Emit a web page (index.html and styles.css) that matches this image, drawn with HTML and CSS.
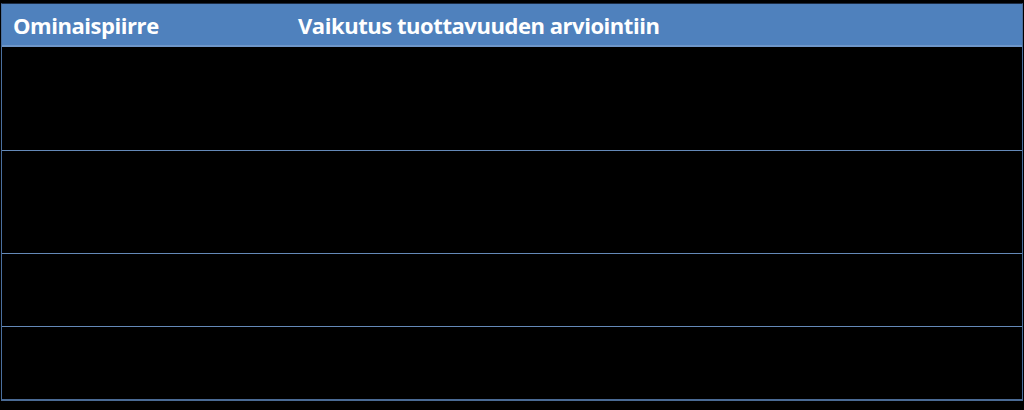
FILE: index.html
```html
<!DOCTYPE html>
<html lang="fi">
<head>
<meta charset="utf-8">
<title>Ominaispiirre</title>
<link rel="stylesheet" href="styles.css">
</head>
<body>
<div class="table">
  <div class="row head">
    <div class="cell c1">Ominaispiirre</div>
    <div class="cell c2">Vaikutus tuottavuuden arviointiin</div>
  </div>
  <div class="row r1"><div class="cell c1"></div><div class="cell c2"></div></div>
  <div class="row r2"><div class="cell c1"></div><div class="cell c2"></div></div>
  <div class="row r3"><div class="cell c1"></div><div class="cell c2"></div></div>
  <div class="row r4"><div class="cell c1"></div><div class="cell c2"></div></div>
</div>
</body>
</html>
```
FILE: styles.css
```css
html, body {
  margin: 0;
  padding: 0;
  background: #000;
  width: 1024px;
  height: 410px;
  overflow: hidden;
}
.table {
  margin: 3px 1px 0 1px;
  width: 1022px;
  box-sizing: border-box;
  border-top: 1px solid #1c2c44;
  border-left: 1px solid #4a6f9e;
  border-right: 1px solid #4a6f9e;
  border-bottom: 2px solid #4a6a94;
  display: flex;
  flex-direction: column;
  font-family: "Open Sans", "Liberation Sans", sans-serif;
}
.row {
  display: flex;
  border-bottom: 1px solid #6489b8;
}
.row.r4 { border-bottom: none; }
.head {
  height: 41px;
  background: #4f81bd;
  border-bottom: 2px solid #6e96c8;
  align-items: center;
  color: #fff;
  font-weight: 700;
  font-size: 22px;
  letter-spacing: -0.45px;
}
.r1 { height: 103px; }
.r2 { height: 102px; }
.r3 { height: 72px; }
.r4 { height: 72px; }
.c1 {
  width: 285px;
  padding-left: 11px;
  box-sizing: border-box;
  flex: none;
}
.c2 {
  flex: 1;
  padding-left: 11px;
}
```
